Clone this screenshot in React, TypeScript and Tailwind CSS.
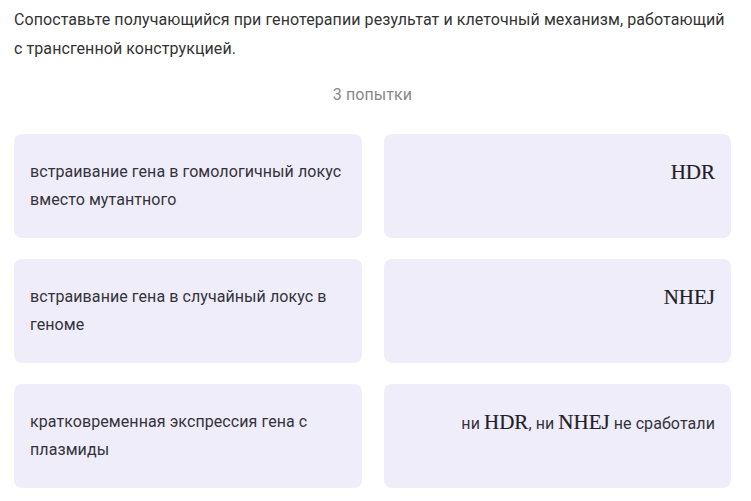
const rows: { left: string; right: React.ReactNode }[] = [
  {
    left: "встраивание гена в гомологичный локус вместо мутантного",
    right: <Tex>HDR</Tex>,
  },
  {
    left: "встраивание гена в случайный локус в геноме",
    right: <Tex>NHEJ</Tex>,
  },
  {
    left: "кратковременная экспрессия гена с плазмиды",
    right: (
      <>
        ни <Tex>HDR</Tex>, ни <Tex>NHEJ</Tex> не сработали
      </>
    ),
  },
];

function Tex({ children }: { children: React.ReactNode }) {
  return (
    <span className="font-['Liberation_Serif',serif] text-[21px] tracking-normal text-[#1f1f2a] [-webkit-text-stroke:0.2px_#1f1f2a]">
      {children}
    </span>
  );
}

export default function App() {
  return (
    <div className="min-h-[501px] bg-white pt-[6px] pr-[20px] pl-[14px] font-['Roboto',sans-serif] text-[16px]/[28px] tracking-[0.08px] text-[#333333]">
      <p className="pr-[4px] leading-[28.8px]">
        Сопоставьте получающийся при генотерапии результат и клеточный механизм, работающий с трансгенной
        конструкцией.
      </p>

      <p className="mt-[17px] text-center leading-[28.8px] text-[#888888]">3 попытки</p>

      <div className="mt-[25px] grid grid-cols-2 gap-x-[22px] gap-y-[21px]">
        {rows.map((row) => (
          <div key={row.left} className="contents">
            <div className="h-[104px] rounded-[8px] bg-[#f0edfa] px-4 py-6 text-[#33333b]">{row.left}</div>
            <div className="h-[104px] rounded-[8px] bg-[#f0edfa] px-4 py-6 text-right text-[#33333b]">
              {row.right}
            </div>
          </div>
        ))}
      </div>
    </div>
  );
}
